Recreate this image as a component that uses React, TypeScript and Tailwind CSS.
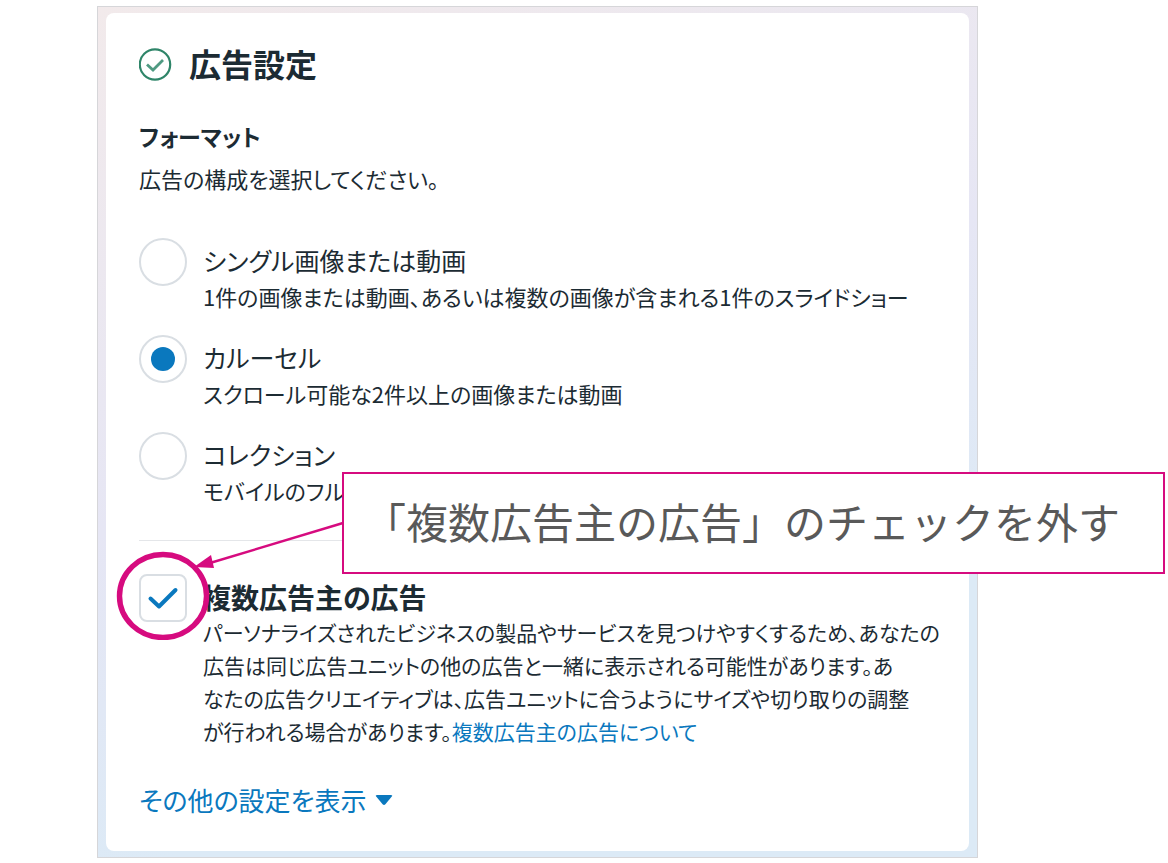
import { useState } from "react";

type FormatOption = {
  id: string;
  label: string;
  description: string;
};

const formats: FormatOption[] = [
  {
    id: "single",
    label: "シングル画像または動画",
    description: "1件の画像または動画、あるいは複数の画像が含まれる1件のスライドショー",
  },
  {
    id: "carousel",
    label: "カルーセル",
    description: "スクロール可能な2件以上の画像または動画",
  },
  {
    id: "collection",
    label: "コレクション",
    description: "モバイルのフルス",
  },
];

function StatusIcon() {
  return (
    <svg viewBox="0 0 34 34" className="size-[34px] shrink-0" fill="none" aria-hidden="true">
      <circle cx="16" cy="16.5" r="15.2" stroke="#2f8569" strokeWidth="2.2" />
      <path d="M8 16.5l6 5.6L24 12" stroke="#4f9a82" strokeWidth="2.8" />
    </svg>
  );
}

function Callout() {
  return (
    <>
      <svg
        viewBox="0 0 240 130"
        className="pointer-events-none absolute -top-[64px] -left-[29px] h-[130px] w-[240px]"
        fill="none"
        aria-hidden="true"
      >
        <ellipse cx="53" cy="86" rx="43.5" ry="41.5" stroke="#d60b7f" strokeWidth="5.4" />
        <path d="M100 53L233 13" stroke="#d60b7f" strokeWidth="2.4" />
        <path d="M84 57L101 45L104 58Z" fill="#d60b7f" />
      </svg>
      <div className="absolute -top-[102px] -right-[229px] left-[203px] flex h-[102px] items-center border-2 border-[#d60b7f] bg-white pb-1.5 pl-5 text-[42px] whitespace-nowrap text-[#595959] [font-feature-settings:normal]">
        「複数広告主の広告」のチェックを外す
      </div>
    </>
  );
}

export default function App() {
  const [format, setFormat] = useState("carousel");
  const [multiAdvertiser, setMultiAdvertiser] = useState(true);

  return (
    <main className="min-h-screen bg-white pt-1.5 pr-[190px] pl-[97px] font-['Noto_Sans_CJK_JP',sans-serif] text-[#1c2b33] [font-feature-settings:'palt']">
      <div className="border border-[#d6d6d9] bg-linear-[160deg] from-[#f2eaeb] via-[#e6e6f4] via-45% to-[#dceaf6] to-75% px-2 pt-1.5 pb-1.5">
        <section className="rounded-lg bg-white px-[33px] pt-8 pb-[31px]">
          <div className="flex items-center gap-4">
            <StatusIcon />
            <h1 className="pb-1 text-[32px] leading-9 font-bold">広告設定</h1>
          </div>

          <h2 className="mt-[33px] text-[23px] leading-9 font-bold">フォーマット</h2>
          <p className="mt-2 text-[22px] leading-[33px]">広告の構成を選択してください。</p>

          <div role="radiogroup" aria-label="フォーマット" className="mt-[43px] flex flex-col gap-[22px]">
            {formats.map((item) => (
              <div key={item.id} className="flex items-start gap-4">
                <input
                  id={item.id}
                  type="radio"
                  name="format"
                  checked={format === item.id}
                  onChange={() => setFormat(item.id)}
                  className="grid size-12 shrink-0 appearance-none place-items-center rounded-full border-2 border-[#d9dee3] bg-white before:size-6 before:rounded-full checked:before:bg-[#0a78be]"
                />
                <label htmlFor={item.id} className="pt-0.5 whitespace-nowrap">
                  <span className="block text-[25px] leading-10">{item.label}</span>
                  <span className="block text-[22px] leading-[33px]">{item.description}</span>
                </label>
              </div>
            ))}
          </div>

          <hr className="my-[33px] border-[#e4e6e9]" />

          <div className="relative flex items-start gap-4">
            <div className="relative size-12 shrink-0">
              <input
                id="multi-advertiser"
                type="checkbox"
                checked={multiAdvertiser}
                onChange={(e) => setMultiAdvertiser(e.target.checked)}
                className="peer block size-12 appearance-none rounded-lg border-2 border-[#d9dee3] bg-white"
              />
              <svg
                viewBox="0 0 48 48"
                className="pointer-events-none absolute inset-0 hidden peer-checked:block"
                fill="none"
                aria-hidden="true"
              >
                <path
                  d="M11.5 24.5L20 32.5L36.5 16"
                  stroke="#0a78be"
                  strokeWidth="4"
                  strokeLinecap="round"
                  strokeLinejoin="round"
                />
              </svg>
            </div>
            <div className="pt-1 whitespace-nowrap">
              <label htmlFor="multi-advertiser" className="block text-[28px] leading-[38px] font-bold">
                複数広告主の広告
              </label>
              <p className="text-[21px] leading-[33px]">
                パーソナライズされたビジネスの製品やサービスを見つけやすくするため、あなたの
                <br />
                広告は同じ広告ユニットの他の広告と一緒に表示される可能性があります。あ
                <br />
                なたの広告クリエイティブは、広告ユニットに合うようにサイズや切り取りの調整
                <br />
                が行われる場合があります。
                <a href="#about" className="text-[#0a78be]">
                  複数広告主の広告について
                </a>
              </p>
            </div>
            <Callout />
          </div>

          <button type="button" className="mt-8 flex items-center gap-2 text-[26px] leading-10 text-[#0a78be]">
            その他の設定を表示
            <svg viewBox="0 0 18 12" className="h-3 w-[18px]" fill="currentColor" aria-hidden="true">
              <path d="M2 1h14q2 0 .8 1.6L10.4 10.2q-1.4 1.4-2.8 0L1.2 2.6Q0 1 2 1z" />
            </svg>
          </button>
        </section>
      </div>
    </main>
  );
}
